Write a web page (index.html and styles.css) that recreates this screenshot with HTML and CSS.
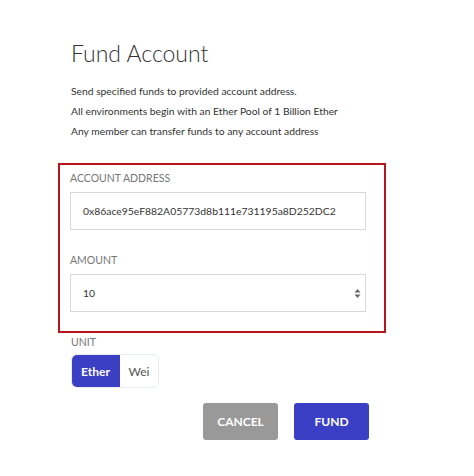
FILE: index.html
```html
<!DOCTYPE html>
<html lang="en">
<head>
<meta charset="utf-8">
<title>Fund Account</title>
<link rel="stylesheet" href="styles.css">
</head>
<body>
<main class="page">
  <h1 class="title">Fund Account</h1>
  <div class="intro">
    <p>Send specified funds to provided account address.</p>
    <p>All environments begin with an Ether Pool of 1 Billion Ether</p>
    <p>Any member can transfer funds to any account address</p>
  </div>
  <section class="highlight">
    <label class="label">ACCOUNT ADDRESS</label>
    <div class="field">0x86ace95eF882A05773d8b111e731195a8D252DC2</div>
    <label class="label label-gap">AMOUNT</label>
    <div class="field field-number">
      <span>10</span>
      <svg class="spin" width="7" height="11" viewBox="0 0 7 11"><path d="M3.5 1 L6.5 4.5 H0.5 Z M3.5 10 L6.5 6.5 H0.5 Z" fill="#666"/></svg>
    </div>
  </section>
  <label class="label unit-label">UNIT</label>
  <div class="toggle">
    <span class="opt opt-active">Ether</span>
    <span class="opt">Wei</span>
  </div>
  <div class="actions">
    <button class="btn btn-cancel">CANCEL</button>
    <button class="btn btn-fund">FUND</button>
  </div>
</main>
</body>
</html>
```

FILE: styles.css
```css
html, body {
  margin: 0;
  padding: 0;
  background: #ffffff;
}
body {
  font-family: Lato, "Open Sans", sans-serif;
  color: #333333;
}
.page {
  padding: 38px 0 0 71px;
}
.title {
  margin: 0;
  font-size: 23px;
  line-height: 30px;
  font-weight: 300;
  color: #333;
}
.intro {
  margin-top: 13px;
}
.intro p {
  margin: 0;
  font-size: 10.3px;
  line-height: 20px;
  color: #333;
}
.highlight {
  margin: 22px 0 0 -13px;
  width: 296px;
  border: 2px solid #b5161e;
  padding: 6px 18px 19px 10px;
}
.label {
  display: block;
  font-size: 10.5px;
  line-height: 14px;
  color: #777;
}
.label-gap {
  margin-top: 23px;
}
.field {
  margin-top: 7px;
  box-sizing: border-box;
  width: 296px;
  height: 38px;
  border: 1px solid #d9d9d9;
  display: flex;
  align-items: center;
  padding: 0 12px;
  font-size: 10.4px;
  color: #333;
}
.field-number {
  justify-content: space-between;
  padding-right: 4px;
}
.spin {
  display: block;
}
.unit-label {
  margin-top: 2px;
}
.toggle {
  margin-top: 5px;
  display: inline-flex;
  height: 34px;
  border-radius: 6px;
  overflow: hidden;
  border: 1px solid #e6ecf2;
  box-sizing: border-box;
}
.opt {
  display: flex;
  align-items: center;
  justify-content: center;
  font-size: 12px;
  color: #555;
  width: 38px;
  background: #fff;
}
.opt-active {
  width: 49px;
  margin: -1px 0 -1px -1px;
  background: #3b3fc4;
  color: #fff;
  font-weight: 700;
}
.actions {
  display: flex;
  gap: 16px;
  margin: 15px 0 0 132px;
}
.btn {
  width: 75px;
  height: 37px;
  border: none;
  border-radius: 3px;
  color: #fff;
  font-family: Lato, "Open Sans", sans-serif;
  font-size: 12px;
  font-weight: 700;
  padding: 0;
}
.btn-cancel {
  background: #999999;
}
.btn-fund {
  background: #3a3fc6;
}
```
